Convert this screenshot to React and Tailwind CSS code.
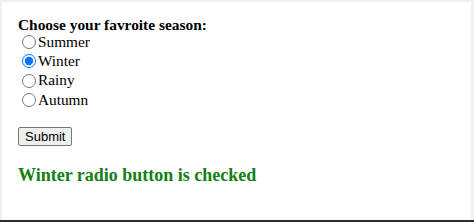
import React, { useState } from "react";

export default function App() {
  const [season, setSeason] = useState("Winter");
  const seasons = ["Summer", "Winter", "Rainy", "Autumn"];
  return (
    <div className="w-[474px] h-[222px] bg-[#f0f0f0] flex flex-col">
      <div className="flex-1 flex flex-col bg-white mt-[2px] ml-[2px] mr-[3px] pl-[16px] pt-[14px] text-black" style={{ fontFamily: '"Liberation Serif", "Times New Roman", serif' }}>
        <div className="text-[15.4px] font-bold leading-[17px]">Choose your favroite season:</div>
        <div className="flex flex-col -mt-[1px]">
          {seasons.map((s) => (
            <label key={s} className="flex items-center h-[19.3px] text-[15.3px] leading-[18px]">
              <input
                type="radio"
                name="season"
                value={s}
                checked={season === s}
                onChange={() => setSeason(s)}
                className="w-[14px] h-[14px] ml-[4px] mr-[2px] mt-[1px] accent-[#0075ff]"
              />
              <span>{s}</span>
            </label>
          ))}
        </div>
        <div className="mt-[15px]">
          <button
            className="h-[19px] px-[6px] text-[13px] leading-[15px] bg-[#efefef] border border-[#767676] border-solid rounded-[2px] text-black"
            style={{ fontFamily: '"Liberation Sans", Arial, sans-serif' }}
          >
            Submit
          </button>
        </div>
        <div className="mt-[17px] text-[18px] font-bold leading-[21px] text-[#138013]">
          {season} radio button is checked
        </div>
      </div>
      <div className="h-[2px] bg-[#2b2b2b]" />
    </div>
  );
}
